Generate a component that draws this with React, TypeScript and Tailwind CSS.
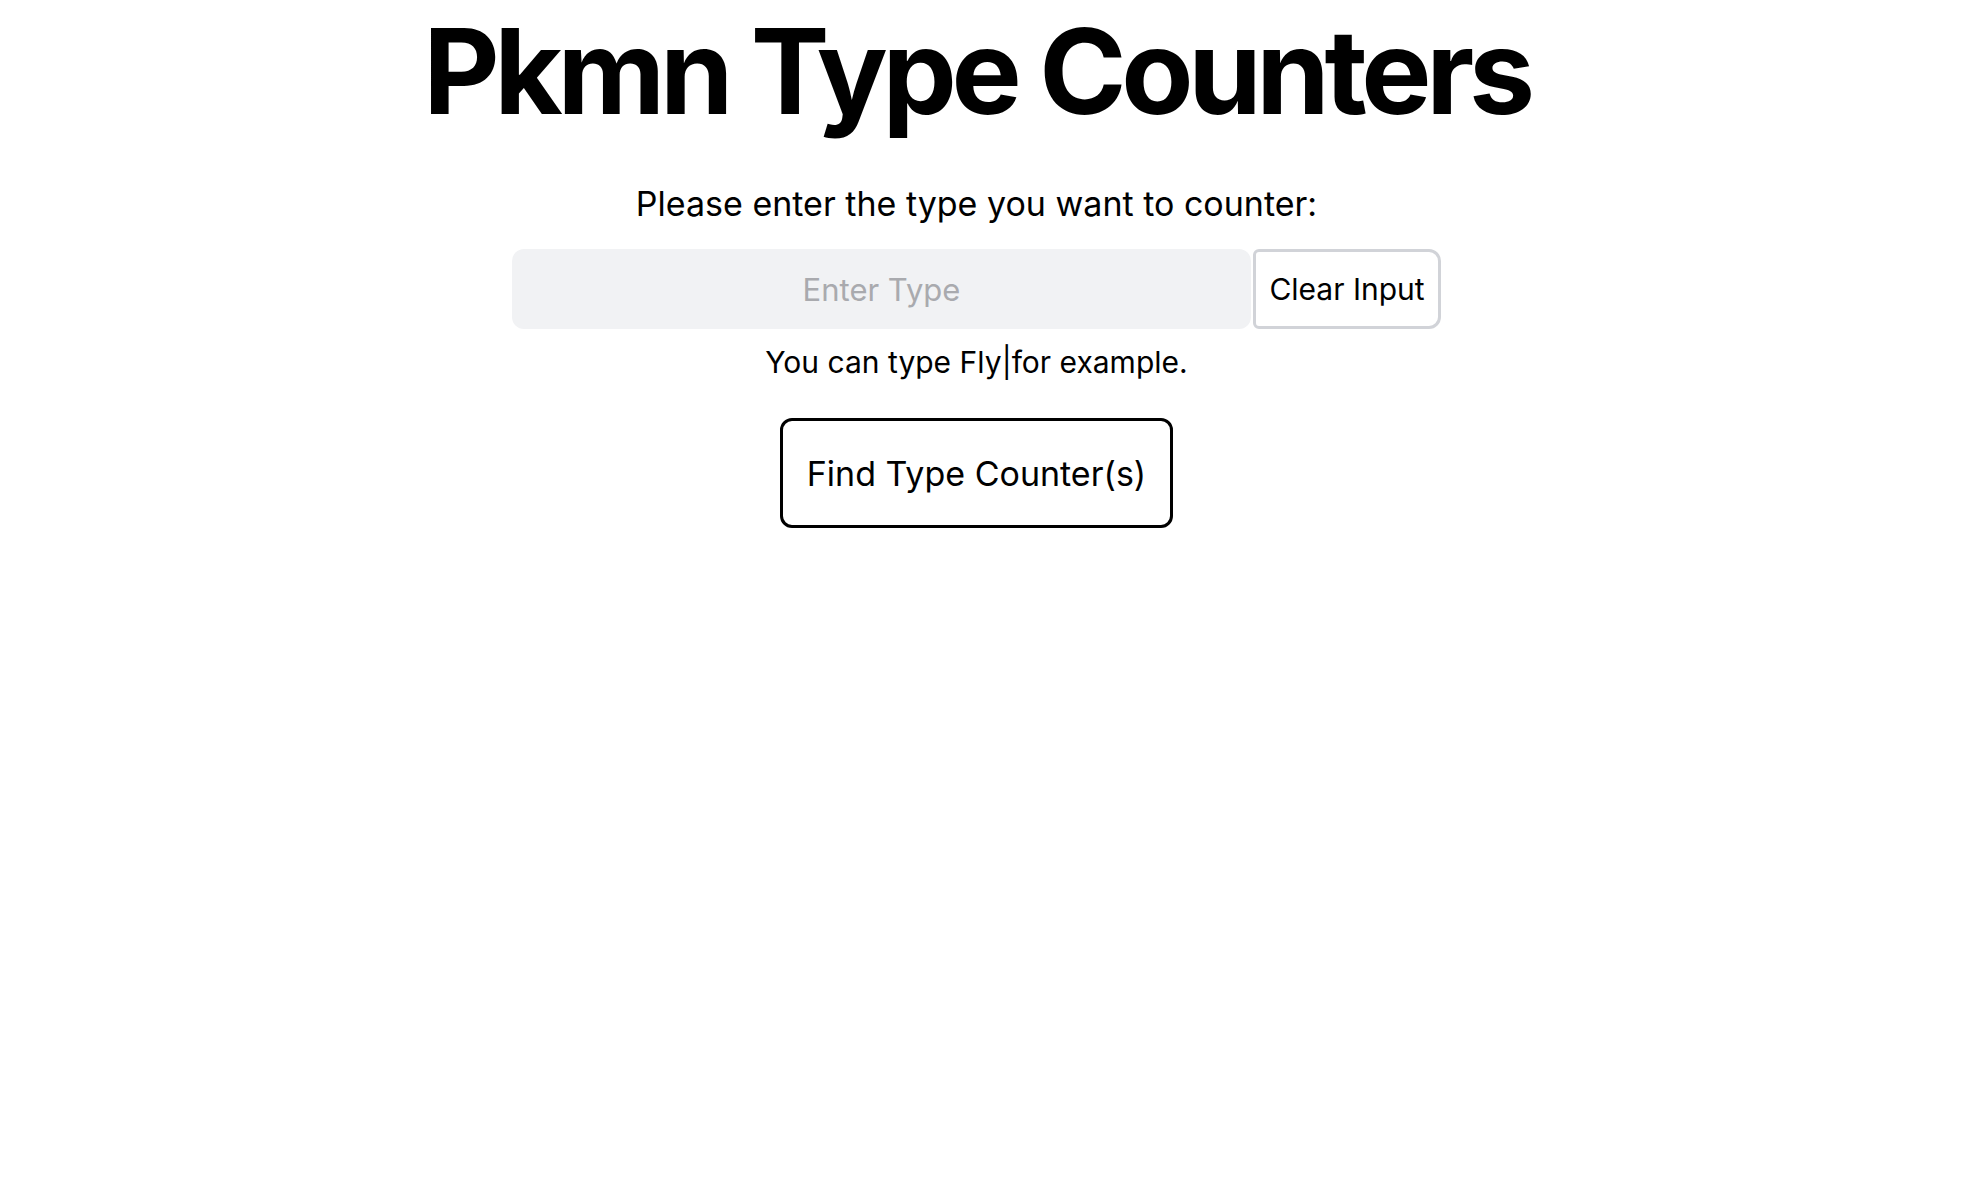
import { useState } from "react";

const App = () => {
  const [value, setValue] = useState("");

  return (
    <div className="min-h-screen bg-white text-black font-['Inter','Liberation_Sans',sans-serif] flex flex-col items-center pr-[9px]">
      <h1 className="text-[118px] leading-none font-bold tracking-[-0.045em] mt-[12px]">Pkmn Type Counters</h1>
      <p className="text-[34px] leading-[40px] mt-[54px]">Please enter the type you want to counter:</p>
      <div className="flex items-stretch gap-[2px] mt-[25px]">
        <input
          value={value}
          onChange={(e) => setValue(e.target.value)}
          placeholder="Enter Type"
          className="w-[739px] h-[80px] rounded-xl bg-[#f1f2f4] text-center text-[31px] placeholder:text-[#a9aaae] outline-none"
        />
        <button
          onClick={() => setValue("")}
          className="w-[188px] h-[80px] border-[3px] border-[#d1d3d8] rounded-r-xl rounded-l-md text-[30px]"
        >
          Clear Input
        </button>
      </div>
      <p className="text-[30px] leading-[36px] mt-[15px]">You can type Fly|for example.</p>
      <button className="mt-[38px] w-[393px] h-[110px] border-[3px] border-black rounded-xl text-[34px]">
        Find Type Counter(s)
      </button>
    </div>
  );
};

export default App;
